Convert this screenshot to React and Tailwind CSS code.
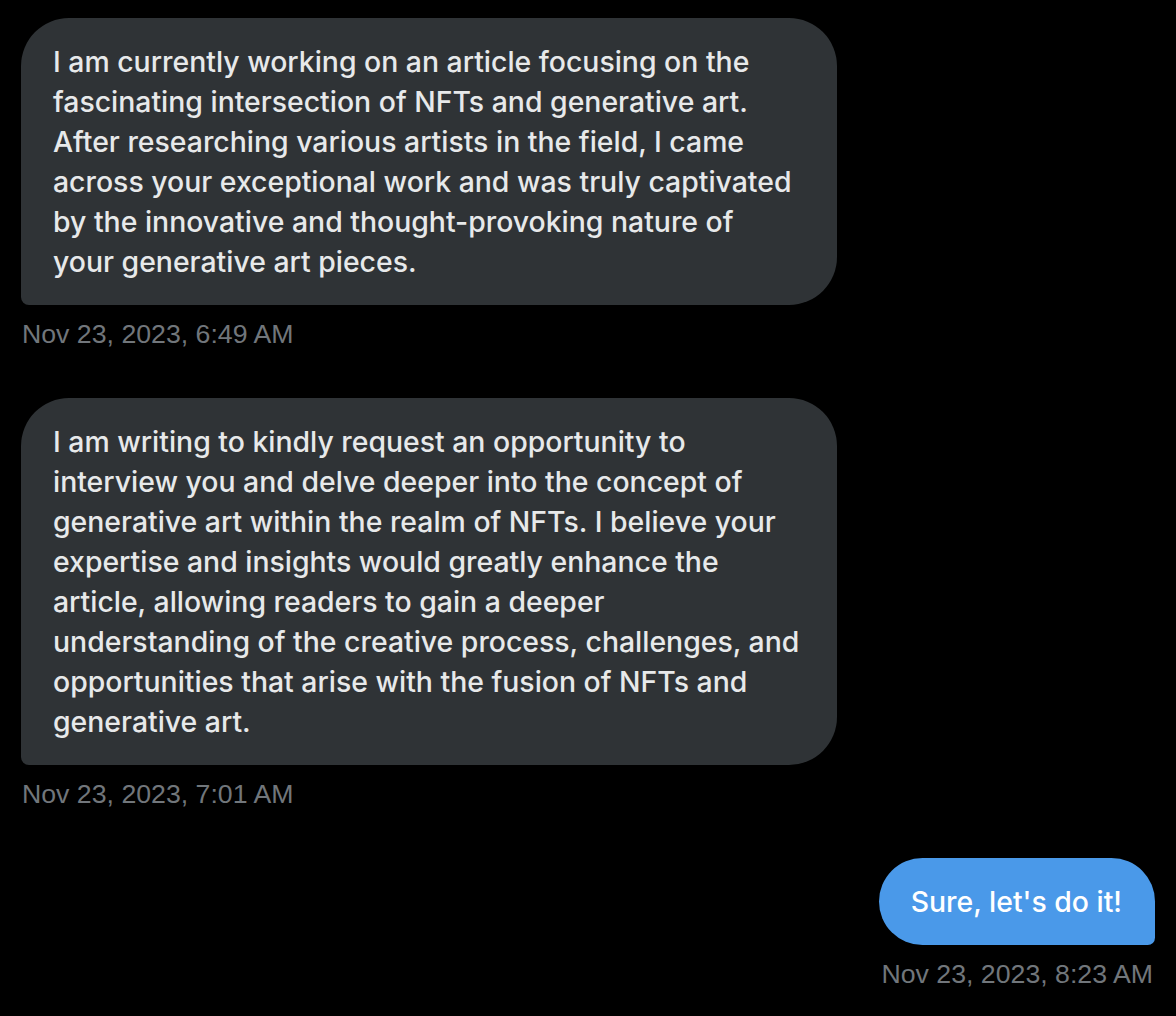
import React from "react";

const received = [
  {
    lines: [
      "I am currently working on an article focusing on the",
      "fascinating intersection of NFTs and generative art.",
      "After researching various artists in the field, I came",
      "across your exceptional work and was truly captivated",
      "by the innovative and thought-provoking nature of",
      "your generative art pieces.",
    ],
    time: "Nov 23, 2023, 6:49 AM",
  },
  {
    lines: [
      "I am writing to kindly request an opportunity to",
      "interview you and delve deeper into the concept of",
      "generative art within the realm of NFTs. I believe your",
      "expertise and insights would greatly enhance the",
      "article, allowing readers to gain a deeper",
      "understanding of the creative process, challenges, and",
      "opportunities that arise with the fusion of NFTs and",
      "generative art.",
    ],
    time: "Nov 23, 2023, 7:01 AM",
  },
];

function Stamp({ children, right }) {
  return (
    <div
      className={
        "mt-[13px] text-[26.7px] leading-[32px] text-[#71767b] font-['Liberation_Sans',Arial,sans-serif] " +
        (right ? "text-right pr-[2px]" : "pl-[1px]")
      }
    >
      {children}
    </div>
  );
}

export default function App() {
  return (
    <div className="min-h-[1016px] w-full bg-black px-[21px] pt-[18px] font-['Inter',sans-serif] antialiased">
      <div className="flex flex-col gap-[48px]">
        {received.map((m) => (
          <div key={m.time} className="flex flex-col items-start">
            <div className="w-[816px] rounded-[48px] rounded-bl-[8px] bg-[#2f3336] pl-[32px] pr-[28px] pt-[24px] pb-[23px] text-[28.4px] font-medium leading-[40px] text-[#e7e9ea]">
              {m.lines.map((l) => (
                <div key={l} className="whitespace-nowrap">
                  {l}
                </div>
              ))}
            </div>
            <Stamp>{m.time}</Stamp>
          </div>
        ))}
        <div className="flex flex-col items-end">
          <div className="rounded-[48px] rounded-br-[8px] bg-[#4a99e9] pl-[32px] pr-[33px] pt-[24px] pb-[23px] text-[28.4px] font-medium leading-[40px] text-white">
            <div className="whitespace-nowrap">Sure, let's do it!</div>
          </div>
          <Stamp right>Nov 23, 2023, 8:23 AM</Stamp>
        </div>
      </div>
    </div>
  );
}
